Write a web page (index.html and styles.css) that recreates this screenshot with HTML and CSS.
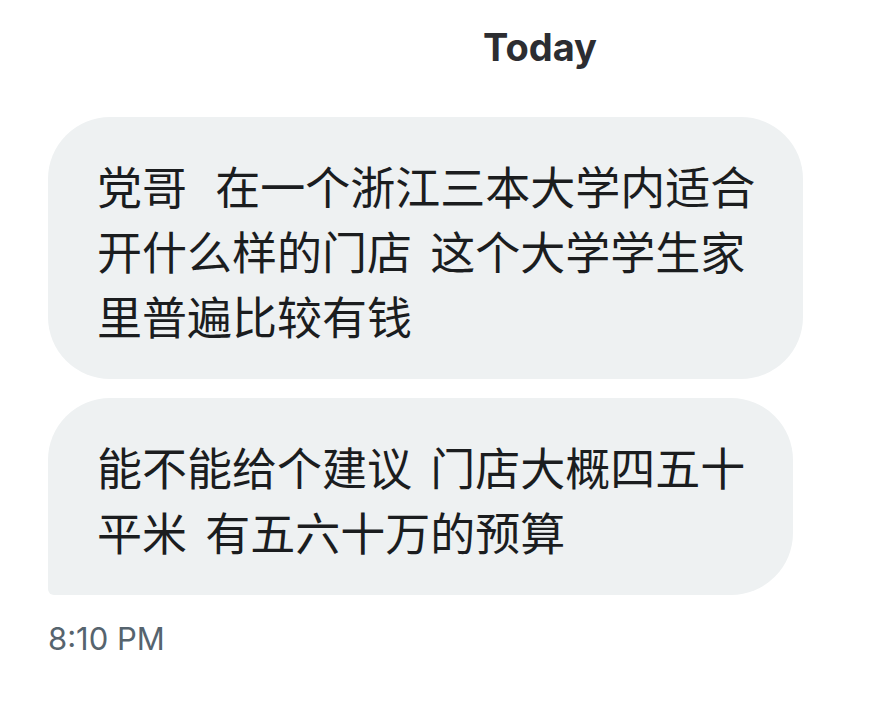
FILE: index.html
```html
<!DOCTYPE html>
<html lang="zh">
  <head>
    <meta charset="UTF-8" />
    <meta name="viewport" content="width=device-width, initial-scale=1" />
    <title>Messages</title>
    <link rel="stylesheet" href="styles.css">
  </head>
  <body>
    <div class="thread">
      <div class="day-label">Today</div>

      <div class="bubble">
        党哥<span class="wide"> </span>在一个浙江三本大学内适合<br />
        开什么样的门店 这个大学学生家<br />
        里普遍比较有钱
      </div>

      <div class="bubble bubble-last">
        能不能给个建议 门店大概四五十<br />
        平米 有五六十万的预算
      </div>

      <div class="timestamp">8:10 PM</div>
    </div>
  </body>
</html>
```

FILE: styles.css
```css
body {
  margin: 0;
  background: #ffffff;
  font-family: Roboto, "Noto Sans CJK SC", sans-serif;
}
.thread {
  display: flex;
  flex-direction: column;
  align-items: flex-start;
  padding: 23px 0 0 48px;
}
.day-label {
  align-self: stretch;
  padding-left: 156px;
  text-align: center;
  font-family: Inter, sans-serif;
  font-size: 38px;
  font-weight: 700;
  line-height: 48px;
  color: #2c2d31;
  margin-bottom: 46px;
}
.bubble {
  background: #eef1f2;
  color: #1b1d1f;
  font-size: 45px;
  line-height: 65px;
  word-spacing: 7px;
  padding: 40px 48px 27px 49px;
  border-radius: 62px;
  margin-bottom: 19px;
  white-space: nowrap;
}
.bubble .wide {
  word-spacing: 17px;
}
.bubble-last {
  border-bottom-left-radius: 6px;
}
.timestamp {
  margin-top: 6px;
  font-family: Inter, sans-serif;
  font-size: 31px;
  color: #56646e;
}
```
